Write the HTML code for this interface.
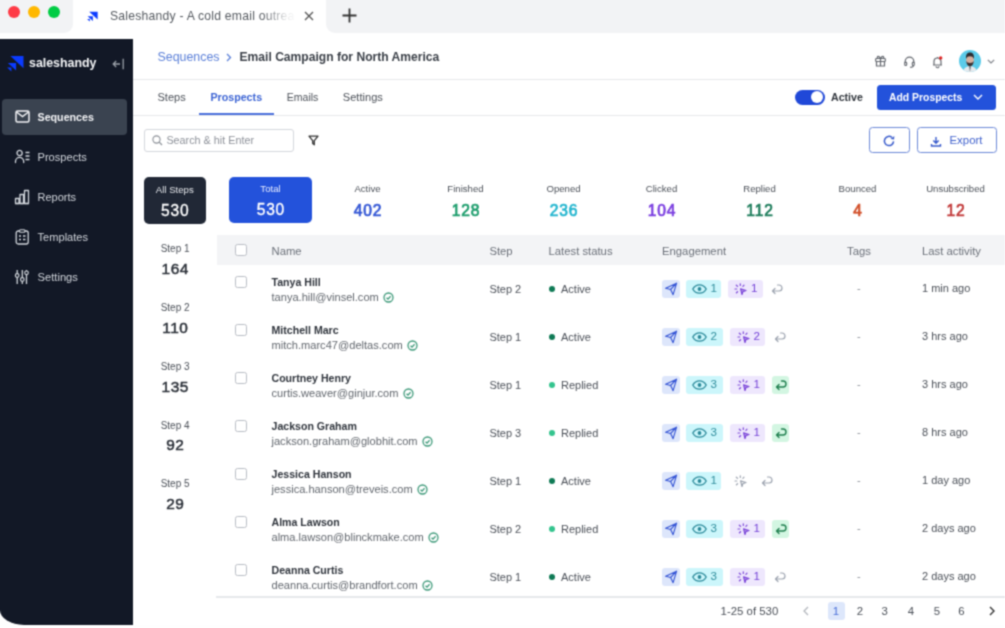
<!DOCTYPE html>
<html><head><meta charset="utf-8">
<style>
*{box-sizing:border-box;margin:0;padding:0}
html,body{width:1005px;height:628px;overflow:hidden;background:#fefefe}
body{position:relative;font-family:"Liberation Sans",sans-serif;color:#374151}
.a{position:absolute;white-space:nowrap;line-height:1}
.b{font-weight:bold}
svg{position:absolute;overflow:visible}
</style></head><body><svg width="0" height="0" style="position:absolute;left:0;top:0"><filter id="bl" x="0" y="0" width="100%" height="100%" color-interpolation-filters="sRGB"><feConvolveMatrix order="3" kernelMatrix="0.044 0.122 0.044 0.122 0.336 0.122 0.044 0.122 0.044" edgeMode="duplicate"/></filter></svg><div id="wrap" style="position:absolute;left:0;top:0;width:1005px;height:628px;background:#fefefe;filter:url(#bl)">
<!-- browser chrome -->
<div class="a" style="left:0;top:0;width:1005px;height:39px;background:#fff"></div>
<div class="a" style="left:0;top:0;width:73px;height:33px;background:#f2f3f5;border-bottom-right-radius:9px"></div>
<div class="a" style="left:326px;top:0;width:679px;height:33px;background:#f2f3f5;border-bottom-left-radius:9px"></div>
<div class="a" style="left:8.2px;top:6px;width:12px;height:12px;border-radius:50%;background:#fe3a46"></div>
<div class="a" style="left:28px;top:6px;width:12px;height:12px;border-radius:50%;background:#ffb800"></div>
<div class="a" style="left:48px;top:6px;width:12px;height:12px;border-radius:50%;background:#00cc44"></div>
<svg style="left:86.5px;top:10.8px" width="11" height="10.3" viewBox="0 0 17 16"><path fill="#0b3bff" d="M3.4 1H16.5V13.3Z M0.9 8H9.1V15.6Z M0.1 12.4H4.4V16.4Z"/></svg>
<div class="a" style="left:110px;top:9.5px;font-size:12.2px;letter-spacing:0.22px;color:#555a60">Saleshandy - A cold email outrea</div><div class="a" style="left:262px;top:5px;width:35px;height:20px;background:linear-gradient(90deg,rgba(255,255,255,0) 0%,rgba(255,255,255,0.85) 70%,#fff 100%)"></div>
<svg style="left:304px;top:10.5px" width="10" height="10" viewBox="0 0 10 10"><path d="M1 1L9 9M9 1L1 9" stroke="#555" stroke-width="1.3"/></svg>
<svg style="left:342px;top:8px" width="15" height="15" viewBox="0 0 15 15"><path d="M7.5 0.5V14.5M0.5 7.5H14.5" stroke="#333" stroke-width="1.8"/></svg>

<!-- sidebar -->
<div class="a" style="left:0;top:39px;width:133px;height:586px;background:#121826;border-bottom-left-radius:24px 15px"></div>
<svg style="left:7px;top:55px" width="17" height="17" viewBox="0 0 17 17"><path fill="#0b3bff" d="M3.4 1H16.5V13.3Z M0.9 8H9.1V15.6Z M0.1 12.4H4.4V16.4Z"/></svg>
<div class="a b" style="left:29px;top:57px;font-size:12.4px;color:#f3f4f6">saleshandy</div>
<svg style="left:112px;top:58px" width="13" height="12" viewBox="0 0 13 12"><path d="M1.2 6H8M4.2 3L1.2 6L4.2 9M11.2 0.8V11.2" stroke="#9aa0a8" stroke-width="1.3" fill="none"/></svg>

<div class="a" style="left:2px;top:99px;width:125px;height:36px;background:#3a4350;border-radius:4px"></div>
<svg style="left:15px;top:110px" width="15" height="13" viewBox="0 0 15 13"><rect x="1" y="1" width="13" height="11" rx="1.5" stroke="#f3f4f6" stroke-width="1.5" fill="none"/><path d="M1.5 2L7.5 6.5L13.5 2" stroke="#f3f4f6" stroke-width="1.5" fill="none"/></svg>
<div class="a b" style="left:37.5px;top:112px;font-size:10.7px;color:#f3f4f6">Sequences</div>

<div class="a" style="left:37.5px;top:152px;font-size:11.1px;color:#d1d5db">Prospects</div>
<div class="a" style="left:37.5px;top:192px;font-size:11px;color:#d1d5db">Reports</div>
<div class="a" style="left:37.5px;top:232px;font-size:11.1px;color:#d1d5db">Templates</div>
<div class="a" style="left:37.5px;top:272px;font-size:11.2px;color:#d1d5db">Settings</div>
<svg style="left:14px;top:149px" width="17" height="15" viewBox="0 0 17 15"><circle cx="5.6" cy="4" r="2.6" stroke="#d1d5db" stroke-width="1.3" fill="none"/><path d="M1.5 13.5V12.5A4 4 0 0 1 9.7 12.5V13.5" stroke="#d1d5db" stroke-width="1.3" fill="none" stroke-linecap="round"/><path d="M11.5 3.5H15.5M11.5 7H15.5M11.5 10.5H15.5" stroke="#d1d5db" stroke-width="1.3"/></svg>
<svg style="left:14px;top:189px" width="17" height="16" viewBox="0 0 17 16"><path d="M1.5 14.5V9.5H5V14.5ZM6 14.5V5.5H9.5V14.5ZM10.5 14.5V1.5H14.5A0 0 0 0 1 14.5 1.5V14.5Z" stroke="#d1d5db" stroke-width="1.3" fill="none" stroke-linejoin="round"/><path d="M1 14.5H15" stroke="#d1d5db" stroke-width="1.3"/></svg>
<svg style="left:15px;top:229px" width="15" height="16" viewBox="0 0 15 16"><rect x="1.2" y="2" width="12" height="13" rx="2" stroke="#d1d5db" stroke-width="1.3" fill="none"/><rect x="4.5" y="0.8" width="5.5" height="2.4" rx="1" stroke="#d1d5db" stroke-width="1.1" fill="#121826"/><path d="M4 7H6M8 7H10.5M4 10.5H6M8 10.5H10.5" stroke="#d1d5db" stroke-width="1.3"/></svg>
<svg style="left:15px;top:269px" width="15" height="16" viewBox="0 0 15 16"><path d="M2.2 1V15M7.3 1V15M11.5 1V15" stroke="#d1d5db" stroke-width="1.3"/><circle cx="2.2" cy="6.5" r="1.8" stroke="#d1d5db" stroke-width="1.2" fill="#121826"/><circle cx="7.3" cy="10.5" r="1.8" stroke="#d1d5db" stroke-width="1.2" fill="#121826"/><circle cx="11.5" cy="3.8" r="1.8" stroke="#d1d5db" stroke-width="1.2" fill="#121826"/></svg>


<!-- header -->
<div class="a" style="left:133px;top:39px;width:872px;height:586px;background:#fff"></div>
<div class="a" style="left:157.5px;top:51px;font-size:12.4px;color:#5a7fd8">Sequences</div>
<svg style="left:226px;top:53px" width="6" height="9" viewBox="0 0 6 9"><path d="M1 1L4.5 4.5L1 8" stroke="#5a7fd8" stroke-width="1.3" fill="none"/></svg>
<div class="a b" style="left:239.5px;top:51px;font-size:12.1px;color:#3a3f47">Email Campaign for North America</div>
<div class="a" style="left:133px;top:78.5px;width:872px;height:1.5px;background:#e6e8eb"></div>
<svg style="left:875px;top:55px" width="11" height="12" viewBox="0 0 11 12"><rect x="0.7" y="3.5" width="9.6" height="3" rx="0.8" stroke="#64686f" stroke-width="1.2" fill="none"/><path d="M1.5 6.5V11H9.5V6.5M5.5 3.5V11" stroke="#64686f" stroke-width="1.2" fill="none"/><path d="M5.5 3.5C4 0.5 1.5 1 2.5 3.2M5.5 3.5C7 0.5 9.5 1 8.5 3.2" stroke="#64686f" stroke-width="1.1" fill="none"/></svg>
<svg style="left:903.5px;top:56px" width="11" height="12" viewBox="0 0 11 12"><path d="M1.2 7V5.5A4.3 4.3 0 0 1 9.8 5.5V7" stroke="#64686f" stroke-width="1.2" fill="none"/><rect x="0.7" y="6" width="2" height="3.5" rx="1" stroke="#64686f" stroke-width="1.1" fill="none"/><rect x="8.3" y="6" width="2" height="3.5" rx="1" stroke="#64686f" stroke-width="1.1" fill="none"/><path d="M9.5 9.5C9.5 10.8 8 11.3 6 11.3" stroke="#64686f" stroke-width="1.1" fill="none"/></svg>
<svg style="left:932px;top:55.5px" width="11" height="12" viewBox="0 0 11 12"><path d="M1 9H10M2 9V5.5A3.5 3.5 0 0 1 9 5.5V9" stroke="#64686f" stroke-width="1.2" fill="none" stroke-linejoin="round"/><path d="M4 10.3A1.5 1.5 0 0 0 7 10.3" stroke="#64686f" stroke-width="1.1" fill="none"/><path d="M5.5 1V2" stroke="#64686f" stroke-width="1.1"/><circle cx="8.7" cy="1.9" r="1.7" fill="#e02424"/></svg>
<svg style="left:959px;top:50px" width="22" height="22" viewBox="0 0 22 22"><defs><clipPath id="av"><circle cx="11" cy="11" r="11"/></clipPath></defs><g clip-path="url(#av)"><rect width="22" height="22" fill="#5ccbe9"/><path d="M3.5 23C4.5 18 7.5 16.3 11 16.3S17.5 18 18.5 23Z" fill="#e6eaee"/><path d="M10.4 16.5L11 22L11.6 16.5Z" fill="#2a3038"/><ellipse cx="11" cy="10" rx="3.9" ry="5.4" fill="#d4b0a0"/><path d="M7 9C6.6 4 8.6 2.6 11 2.6S15.4 4 15 9C14.3 6.8 13 6.2 11 6.2S7.7 6.8 7 9Z" fill="#2a2c30"/><path d="M7.2 10.8C7.5 14.8 9 16.5 11 16.5S14.5 14.8 14.8 10.8C14 12.5 13.2 13 11 13S8 12.5 7.2 10.8Z" fill="#3a3234"/></g></svg>
<svg style="left:986.8px;top:58.8px" width="8" height="5" viewBox="0 0 8 5"><path d="M0.8 0.8L4 4L7.2 0.8" stroke="#7a7e85" stroke-width="1.1" fill="none"/></svg>


<div class="a" style="left:157.5px;top:91.5px;font-size:11px;color:#4b5058">Steps</div>
<div class="a b" style="left:210.4px;top:91.5px;font-size:10.7px;color:#3c64d4">Prospects</div>
<div class="a" style="left:286.8px;top:91.5px;font-size:10.5px;color:#4b5058">Emails</div>
<div class="a" style="left:342.8px;top:91.5px;font-size:11.1px;color:#4b5058">Settings</div>
<div class="a" style="left:199px;top:113px;width:75px;height:2px;background:#4a6fdc"></div>
<div class="a" style="left:133px;top:114.5px;width:872px;height:1.5px;background:#e6e8eb"></div>

<!-- toggle / add prospects -->
<div class="a" style="left:794.6px;top:89.6px;width:30px;height:15px;border-radius:8px;background:#2048d8"></div>
<div class="a" style="left:811px;top:91px;width:12px;height:12px;border-radius:50%;background:#fff"></div>
<div class="a b" style="left:831px;top:92px;font-size:10.6px;color:#2f343b">Active</div>
<div class="a" style="left:876.7px;top:85px;width:119.3px;height:24.5px;border-radius:3.5px;background:#2352db"></div>
<div class="a b" style="left:889px;top:93px;font-size:10.4px;color:#fff">Add Prospects</div>
<svg style="left:973px;top:93.8px" width="10" height="6" viewBox="0 0 10 6"><path d="M1 1L5 5L9 1" stroke="#fff" stroke-width="1.4" fill="none"/></svg>

<!-- search row -->
<div class="a" style="left:144px;top:128.5px;width:150px;height:23.5px;border:1px solid #d4d7dc;border-radius:3px"></div>
<svg style="left:152px;top:134.5px" width="11" height="11" viewBox="0 0 11 11"><circle cx="4.5" cy="4.5" r="3.6" stroke="#8a8f96" stroke-width="1.1" fill="none"/><path d="M7.2 7.2L10 10" stroke="#8a8f96" stroke-width="1.2"/></svg>
<div class="a" style="left:166.4px;top:134.8px;font-size:10.8px;color:#8d9199">Search &amp; hit Enter</div>
<svg style="left:308px;top:134.5px" width="11" height="11" viewBox="0 0 11 11"><path d="M1 1.2H10L6.3 5.6V9.8L4.7 8.6V5.6Z" stroke="#333" stroke-width="1.3" fill="none" stroke-linejoin="round"/></svg>
<div class="a" style="left:868.6px;top:127.2px;width:41px;height:26.3px;border:1px solid #6c89d8;border-radius:3.5px"></div>
<svg style="left:883px;top:134.6px" width="12" height="12" viewBox="0 0 12 12"><path d="M10.58 6.4A4.6 4.6 0 1 1 8.9 2.4" stroke="#3a5ccc" stroke-width="1.5" fill="none"/><path d="M11.3 0.9L11.1 4.6L7.5 3.9Z" fill="#3a5ccc"/></svg>
<div class="a" style="left:916.6px;top:127.2px;width:80.2px;height:26.3px;border:1px solid #6c89d8;border-radius:3.5px"></div>
<svg style="left:929.5px;top:134.5px" width="12" height="12" viewBox="0 0 12 12"><path d="M6 2V8M3.3 5.5L6 8.2L8.7 5.5M1.5 9V11H10.5V9" stroke="#3a5ccc" stroke-width="1.4" fill="none"/></svg>
<div class="a" style="left:949.5px;top:134.5px;font-size:11.4px;color:#3d5fcc">Export</div>

<!-- stats -->
<div class="a" style="left:144px;top:177.3px;width:61.6px;height:46.7px;border-radius:5px;background:#212836"></div>
<div class="a" style="left:144px;top:184.5px;width:61.6px;text-align:center;font-size:9.6px;color:#e5e7eb">All Steps</div>
<div class="a" style="left:144.4px;top:202.5px;width:61.6px;text-align:center;font-size:15.6px;letter-spacing:0.8px;-webkit-text-stroke:0.35px #fff;color:#fff">530</div>
<div class="a" style="left:229px;top:176.7px;width:83px;height:46.8px;border-radius:5px;background:#2352db"></div>
<div class="a" style="left:229px;top:183.5px;width:83px;text-align:center;font-size:9.6px;color:#e8edff">Total</div>
<div class="a" style="left:229.4px;top:202px;width:83px;text-align:center;font-size:15.6px;letter-spacing:0.8px;-webkit-text-stroke:0.35px #fff;color:#fff">530</div>

<div class="a" style="left:317.5px;top:184px;width:100px;text-align:center;font-size:9.6px;color:#4b5058">Active</div>
<div class="a" style="left:318.0px;top:202.6px;width:100px;text-align:center;font-size:15.6px;letter-spacing:0.8px;-webkit-text-stroke:0.7px #3457d5;color:#3457d5">402</div>
<div class="a" style="left:415.5px;top:184px;width:100px;text-align:center;font-size:9.6px;color:#4b5058">Finished</div>
<div class="a" style="left:416.0px;top:202.6px;width:100px;text-align:center;font-size:15.6px;letter-spacing:0.8px;-webkit-text-stroke:0.7px #1f9e6e;color:#1f9e6e">128</div>
<div class="a" style="left:513.5px;top:184px;width:100px;text-align:center;font-size:9.6px;color:#4b5058">Opened</div>
<div class="a" style="left:514.0px;top:202.6px;width:100px;text-align:center;font-size:15.6px;letter-spacing:0.8px;-webkit-text-stroke:0.7px #25b6cf;color:#25b6cf">236</div>
<div class="a" style="left:611.5px;top:184px;width:100px;text-align:center;font-size:9.6px;color:#4b5058">Clicked</div>
<div class="a" style="left:612.0px;top:202.6px;width:100px;text-align:center;font-size:15.6px;letter-spacing:0.8px;-webkit-text-stroke:0.7px #7b3fe0;color:#7b3fe0">104</div>
<div class="a" style="left:709.5px;top:184px;width:100px;text-align:center;font-size:9.6px;color:#4b5058">Replied</div>
<div class="a" style="left:710.0px;top:202.6px;width:100px;text-align:center;font-size:15.6px;letter-spacing:0.8px;-webkit-text-stroke:0.7px #1e7d5c;color:#1e7d5c">112</div>
<div class="a" style="left:807.5px;top:184px;width:100px;text-align:center;font-size:9.6px;color:#4b5058">Bounced</div>
<div class="a" style="left:808.0px;top:202.6px;width:100px;text-align:center;font-size:15.6px;letter-spacing:0.8px;-webkit-text-stroke:0.7px #d2502a;color:#d2502a">4</div>
<div class="a" style="left:905.5px;top:184px;width:100px;text-align:center;font-size:9.6px;color:#4b5058">Unsubscribed</div>
<div class="a" style="left:906.0px;top:202.6px;width:100px;text-align:center;font-size:15.6px;letter-spacing:0.8px;-webkit-text-stroke:0.7px #c23a3a;color:#c23a3a">12</div>
<div class="a" style="left:144.3px;top:244.3px;width:61.6px;text-align:center;font-size:10px;color:#4b5058">Step 1</div>
<div class="a" style="left:144.5px;top:261.0px;width:61.6px;text-align:center;font-size:15.4px;letter-spacing:0.6px;-webkit-text-stroke:0.5px #2b3038;color:#2b3038">164</div>
<div class="a" style="left:144.3px;top:303.05px;width:61.6px;text-align:center;font-size:10px;color:#4b5058">Step 2</div>
<div class="a" style="left:144.5px;top:319.75px;width:61.6px;text-align:center;font-size:15.4px;letter-spacing:0.6px;-webkit-text-stroke:0.5px #2b3038;color:#2b3038">110</div>
<div class="a" style="left:144.3px;top:361.8px;width:61.6px;text-align:center;font-size:10px;color:#4b5058">Step 3</div>
<div class="a" style="left:144.5px;top:378.5px;width:61.6px;text-align:center;font-size:15.4px;letter-spacing:0.6px;-webkit-text-stroke:0.5px #2b3038;color:#2b3038">135</div>
<div class="a" style="left:144.3px;top:420.55px;width:61.6px;text-align:center;font-size:10px;color:#4b5058">Step 4</div>
<div class="a" style="left:144.5px;top:437.25px;width:61.6px;text-align:center;font-size:15.4px;letter-spacing:0.6px;-webkit-text-stroke:0.5px #2b3038;color:#2b3038">92</div>
<div class="a" style="left:144.3px;top:479.3px;width:61.6px;text-align:center;font-size:10px;color:#4b5058">Step 5</div>
<div class="a" style="left:144.5px;top:496.0px;width:61.6px;text-align:center;font-size:15.4px;letter-spacing:0.6px;-webkit-text-stroke:0.5px #2b3038;color:#2b3038">29</div>


<!-- table header -->
<div class="a" style="left:217px;top:235px;width:788px;height:30px;background:#f3f4f6"></div>
<div class="a" style="left:235px;top:244.3px;width:12px;height:12px;border:1px solid #b9bdc4;border-radius:2.5px;background:#fff"></div>
<div class="a" style="left:271.5px;top:245.5px;font-size:11.3px;color:#6b7079">Name</div>
<div class="a" style="left:489.4px;top:245.5px;font-size:11.3px;color:#6b7079">Step</div>
<div class="a" style="left:548.5px;top:245.5px;font-size:11.3px;color:#6b7079">Latest status</div>
<div class="a" style="left:662px;top:245.5px;font-size:11.3px;color:#6b7079">Engagement</div>
<div class="a" style="left:847px;top:245.5px;font-size:11.3px;color:#6b7079">Tags</div>
<div class="a" style="left:922px;top:245.5px;font-size:11.3px;color:#6b7079">Last activity</div>

<div class="a" style="left:235px;top:275.7px;width:12px;height:12px;border:1px solid #b9bdc4;border-radius:2.5px;background:#fff"></div>
<div class="a b" style="left:271.5px;top:277px;font-size:10.6px;color:#2f343c;">Tanya Hill</div>
<div class="a" style="left:271.5px;top:292px;font-size:11.08px;color:#62676e">tanya.hill@vinsel.com<svg style="position:relative;left:0;top:0;margin-left:4px;vertical-align:-2px" width="11" height="11" viewBox="0 0 11 11"><circle cx="5.5" cy="5.5" r="4.5" stroke="#3f9a7a" stroke-width="1.3" fill="none"/><path d="M3.5 5.8L5 7.1L7.6 4.2" stroke="#3f9a7a" stroke-width="1.3" fill="none"/></svg></div>
<div class="a" style="left:489.4px;top:283.5px;font-size:11px;color:#4b5058;">Step 2</div>
<div class="a" style="left:548.9px;top:285.5px;width:6.5px;height:6.5px;border-radius:50%;background:#0f7a55"></div>
<div class="a" style="left:561px;top:283.5px;font-size:11px;color:#4b5058;">Active</div>
<div class="a" style="left:662.2px;top:280px;width:17.6px;height:17.7px;border-radius:3px;background:#dde6fb"></div>
<svg style="left:664px;top:282px" width="14" height="14" viewBox="0 0 14 14"><path d="M1.6 6.3L12.6 1.2L9.1 12.7L6.6 7.5Z M6.6 7.5L12.6 1.2" stroke="#3555d5" stroke-width="1.15" fill="none" stroke-linejoin="round"/></svg>
<div class="a" style="left:685.9px;top:280px;width:35px;height:17.7px;border-radius:3px;background:#ccf6fb"></div>
<svg style="left:692px;top:284px" width="15" height="10" viewBox="0 0 15 10"><path d="M0.8 5C2.5 1.8 5 0.8 7.5 0.8S12.5 1.8 14.2 5C12.5 8.2 10 9.2 7.5 9.2S2.5 8.2 0.8 5Z" stroke="#2b8a9a" stroke-width="1.3" fill="none"/><circle cx="7.5" cy="5" r="1.9" fill="#2b8a9a"/></svg>
<div class="a" style="left:710.5px;top:281.8px;font-size:11.6px;color:#2f8d9c;">1</div>
<div class="a" style="left:727.5px;top:280px;width:35px;height:17.7px;border-radius:3px;background:#eee7fd"></div>
<svg style="left:734.0px;top:283px" width="13" height="13" viewBox="0 0 13 13"><path d="M1 6H2.8M2.3 2.2L3.6 3.4M6.3 0.8V2.4M10 2.2L8.9 3.4M2.4 9.8L3.6 8.7" stroke="#7b46d8" stroke-width="1.2" stroke-linecap="round"/><path d="M6.6 5.9L12 7.5L8.9 8.6L8 11.5Z" stroke="#7b46d8" stroke-width="1.2" fill="#7b46d8" fill-opacity="0.45" stroke-linejoin="round"/></svg>
<div class="a" style="left:751.0px;top:281.8px;font-size:11.6px;color:#7442d6;">1</div>
<svg style="left:771.1px;top:284px" width="12" height="10" viewBox="0 0 12 10"><path d="M1.5 7H8A3 3 0 0 0 8 1H6.5M4 4.5L1.5 7L4 9.5" stroke="#9ca3af" stroke-width="1.2" fill="none" stroke-linecap="round" stroke-linejoin="round"/></svg>
<div class="a" style="left:857px;top:283px;font-size:11px;color:#8d9199;">-</div>
<div class="a" style="left:922px;top:283px;font-size:11px;color:#4b5058;">1 min ago</div>
<div class="a" style="left:235px;top:323.7px;width:12px;height:12px;border:1px solid #b9bdc4;border-radius:2.5px;background:#fff"></div>
<div class="a b" style="left:271.5px;top:325px;font-size:10.6px;color:#2f343c;">Mitchell Marc</div>
<div class="a" style="left:271.5px;top:340px;font-size:11.08px;color:#62676e">mitch.marc47@deltas.com<svg style="position:relative;left:0;top:0;margin-left:4px;vertical-align:-2px" width="11" height="11" viewBox="0 0 11 11"><circle cx="5.5" cy="5.5" r="4.5" stroke="#3f9a7a" stroke-width="1.3" fill="none"/><path d="M3.5 5.8L5 7.1L7.6 4.2" stroke="#3f9a7a" stroke-width="1.3" fill="none"/></svg></div>
<div class="a" style="left:489.4px;top:331.5px;font-size:11px;color:#4b5058;">Step 1</div>
<div class="a" style="left:548.9px;top:333.5px;width:6.5px;height:6.5px;border-radius:50%;background:#0f7a55"></div>
<div class="a" style="left:561px;top:331.5px;font-size:11px;color:#4b5058;">Active</div>
<div class="a" style="left:662.2px;top:328px;width:17.6px;height:17.7px;border-radius:3px;background:#dde6fb"></div>
<svg style="left:664px;top:330px" width="14" height="14" viewBox="0 0 14 14"><path d="M1.6 6.3L12.6 1.2L9.1 12.7L6.6 7.5Z M6.6 7.5L12.6 1.2" stroke="#3555d5" stroke-width="1.15" fill="none" stroke-linejoin="round"/></svg>
<div class="a" style="left:685.9px;top:328px;width:37.6px;height:17.7px;border-radius:3px;background:#ccf6fb"></div>
<svg style="left:692px;top:332px" width="15" height="10" viewBox="0 0 15 10"><path d="M0.8 5C2.5 1.8 5 0.8 7.5 0.8S12.5 1.8 14.2 5C12.5 8.2 10 9.2 7.5 9.2S2.5 8.2 0.8 5Z" stroke="#2b8a9a" stroke-width="1.3" fill="none"/><circle cx="7.5" cy="5" r="1.9" fill="#2b8a9a"/></svg>
<div class="a" style="left:710.5px;top:329.8px;font-size:11.6px;color:#2f8d9c;">2</div>
<div class="a" style="left:730.1px;top:328px;width:35px;height:17.7px;border-radius:3px;background:#eee7fd"></div>
<svg style="left:736.6px;top:331px" width="13" height="13" viewBox="0 0 13 13"><path d="M1 6H2.8M2.3 2.2L3.6 3.4M6.3 0.8V2.4M10 2.2L8.9 3.4M2.4 9.8L3.6 8.7" stroke="#7b46d8" stroke-width="1.2" stroke-linecap="round"/><path d="M6.6 5.9L12 7.5L8.9 8.6L8 11.5Z" stroke="#7b46d8" stroke-width="1.2" fill="#7b46d8" fill-opacity="0.45" stroke-linejoin="round"/></svg>
<div class="a" style="left:753.6px;top:329.8px;font-size:11.6px;color:#7442d6;">2</div>
<svg style="left:773.7px;top:332px" width="12" height="10" viewBox="0 0 12 10"><path d="M1.5 7H8A3 3 0 0 0 8 1H6.5M4 4.5L1.5 7L4 9.5" stroke="#9ca3af" stroke-width="1.2" fill="none" stroke-linecap="round" stroke-linejoin="round"/></svg>
<div class="a" style="left:857px;top:331px;font-size:11px;color:#8d9199;">-</div>
<div class="a" style="left:922px;top:331px;font-size:11px;color:#4b5058;">3 hrs ago</div>
<div class="a" style="left:235px;top:371.7px;width:12px;height:12px;border:1px solid #b9bdc4;border-radius:2.5px;background:#fff"></div>
<div class="a b" style="left:271.5px;top:373px;font-size:10.6px;color:#2f343c;">Courtney Henry</div>
<div class="a" style="left:271.5px;top:388px;font-size:11.08px;color:#62676e">curtis.weaver@ginjur.com<svg style="position:relative;left:0;top:0;margin-left:4px;vertical-align:-2px" width="11" height="11" viewBox="0 0 11 11"><circle cx="5.5" cy="5.5" r="4.5" stroke="#3f9a7a" stroke-width="1.3" fill="none"/><path d="M3.5 5.8L5 7.1L7.6 4.2" stroke="#3f9a7a" stroke-width="1.3" fill="none"/></svg></div>
<div class="a" style="left:489.4px;top:379.5px;font-size:11px;color:#4b5058;">Step 1</div>
<div class="a" style="left:548.9px;top:381.5px;width:6.5px;height:6.5px;border-radius:50%;background:#34c48e"></div>
<div class="a" style="left:561px;top:379.5px;font-size:11px;color:#4b5058;">Replied</div>
<div class="a" style="left:662.2px;top:376px;width:17.6px;height:17.7px;border-radius:3px;background:#dde6fb"></div>
<svg style="left:664px;top:378px" width="14" height="14" viewBox="0 0 14 14"><path d="M1.6 6.3L12.6 1.2L9.1 12.7L6.6 7.5Z M6.6 7.5L12.6 1.2" stroke="#3555d5" stroke-width="1.15" fill="none" stroke-linejoin="round"/></svg>
<div class="a" style="left:685.9px;top:376px;width:37.6px;height:17.7px;border-radius:3px;background:#ccf6fb"></div>
<svg style="left:692px;top:380px" width="15" height="10" viewBox="0 0 15 10"><path d="M0.8 5C2.5 1.8 5 0.8 7.5 0.8S12.5 1.8 14.2 5C12.5 8.2 10 9.2 7.5 9.2S2.5 8.2 0.8 5Z" stroke="#2b8a9a" stroke-width="1.3" fill="none"/><circle cx="7.5" cy="5" r="1.9" fill="#2b8a9a"/></svg>
<div class="a" style="left:710.5px;top:377.8px;font-size:11.6px;color:#2f8d9c;">3</div>
<div class="a" style="left:730.1px;top:376px;width:35px;height:17.7px;border-radius:3px;background:#eee7fd"></div>
<svg style="left:736.6px;top:379px" width="13" height="13" viewBox="0 0 13 13"><path d="M1 6H2.8M2.3 2.2L3.6 3.4M6.3 0.8V2.4M10 2.2L8.9 3.4M2.4 9.8L3.6 8.7" stroke="#7b46d8" stroke-width="1.2" stroke-linecap="round"/><path d="M6.6 5.9L12 7.5L8.9 8.6L8 11.5Z" stroke="#7b46d8" stroke-width="1.2" fill="#7b46d8" fill-opacity="0.45" stroke-linejoin="round"/></svg>
<div class="a" style="left:753.6px;top:377.8px;font-size:11.6px;color:#7442d6;">1</div>
<div class="a" style="left:771.7px;top:376px;width:17.6px;height:17.7px;border-radius:3px;background:#d3f6e2"></div>
<svg style="left:774.7px;top:380px" width="12" height="10" viewBox="0 0 12 10"><path d="M1.5 7H8A3 3 0 0 0 8 1H6.5M4 4.5L1.5 7L4 9.5" stroke="#1f7f4f" stroke-width="1.4" fill="none" stroke-linecap="round" stroke-linejoin="round"/></svg>
<div class="a" style="left:857px;top:379px;font-size:11px;color:#8d9199;">-</div>
<div class="a" style="left:922px;top:379px;font-size:11px;color:#4b5058;">3 hrs ago</div>
<div class="a" style="left:235px;top:419.7px;width:12px;height:12px;border:1px solid #b9bdc4;border-radius:2.5px;background:#fff"></div>
<div class="a b" style="left:271.5px;top:421px;font-size:10.6px;color:#2f343c;">Jackson Graham</div>
<div class="a" style="left:271.5px;top:436px;font-size:11.08px;color:#62676e">jackson.graham@globhit.com<svg style="position:relative;left:0;top:0;margin-left:4px;vertical-align:-2px" width="11" height="11" viewBox="0 0 11 11"><circle cx="5.5" cy="5.5" r="4.5" stroke="#3f9a7a" stroke-width="1.3" fill="none"/><path d="M3.5 5.8L5 7.1L7.6 4.2" stroke="#3f9a7a" stroke-width="1.3" fill="none"/></svg></div>
<div class="a" style="left:489.4px;top:427.5px;font-size:11px;color:#4b5058;">Step 3</div>
<div class="a" style="left:548.9px;top:429.5px;width:6.5px;height:6.5px;border-radius:50%;background:#34c48e"></div>
<div class="a" style="left:561px;top:427.5px;font-size:11px;color:#4b5058;">Replied</div>
<div class="a" style="left:662.2px;top:424px;width:17.6px;height:17.7px;border-radius:3px;background:#dde6fb"></div>
<svg style="left:664px;top:426px" width="14" height="14" viewBox="0 0 14 14"><path d="M1.6 6.3L12.6 1.2L9.1 12.7L6.6 7.5Z M6.6 7.5L12.6 1.2" stroke="#3555d5" stroke-width="1.15" fill="none" stroke-linejoin="round"/></svg>
<div class="a" style="left:685.9px;top:424px;width:37.6px;height:17.7px;border-radius:3px;background:#ccf6fb"></div>
<svg style="left:692px;top:428px" width="15" height="10" viewBox="0 0 15 10"><path d="M0.8 5C2.5 1.8 5 0.8 7.5 0.8S12.5 1.8 14.2 5C12.5 8.2 10 9.2 7.5 9.2S2.5 8.2 0.8 5Z" stroke="#2b8a9a" stroke-width="1.3" fill="none"/><circle cx="7.5" cy="5" r="1.9" fill="#2b8a9a"/></svg>
<div class="a" style="left:710.5px;top:425.8px;font-size:11.6px;color:#2f8d9c;">3</div>
<div class="a" style="left:730.1px;top:424px;width:35px;height:17.7px;border-radius:3px;background:#eee7fd"></div>
<svg style="left:736.6px;top:427px" width="13" height="13" viewBox="0 0 13 13"><path d="M1 6H2.8M2.3 2.2L3.6 3.4M6.3 0.8V2.4M10 2.2L8.9 3.4M2.4 9.8L3.6 8.7" stroke="#7b46d8" stroke-width="1.2" stroke-linecap="round"/><path d="M6.6 5.9L12 7.5L8.9 8.6L8 11.5Z" stroke="#7b46d8" stroke-width="1.2" fill="#7b46d8" fill-opacity="0.45" stroke-linejoin="round"/></svg>
<div class="a" style="left:753.6px;top:425.8px;font-size:11.6px;color:#7442d6;">1</div>
<div class="a" style="left:771.7px;top:424px;width:17.6px;height:17.7px;border-radius:3px;background:#d3f6e2"></div>
<svg style="left:774.7px;top:428px" width="12" height="10" viewBox="0 0 12 10"><path d="M1.5 7H8A3 3 0 0 0 8 1H6.5M4 4.5L1.5 7L4 9.5" stroke="#1f7f4f" stroke-width="1.4" fill="none" stroke-linecap="round" stroke-linejoin="round"/></svg>
<div class="a" style="left:857px;top:427px;font-size:11px;color:#8d9199;">-</div>
<div class="a" style="left:922px;top:427px;font-size:11px;color:#4b5058;">8 hrs ago</div>
<div class="a" style="left:235px;top:467.7px;width:12px;height:12px;border:1px solid #b9bdc4;border-radius:2.5px;background:#fff"></div>
<div class="a b" style="left:271.5px;top:469px;font-size:10.6px;color:#2f343c;">Jessica Hanson</div>
<div class="a" style="left:271.5px;top:484px;font-size:11.08px;color:#62676e">jessica.hanson@treveis.com<svg style="position:relative;left:0;top:0;margin-left:4px;vertical-align:-2px" width="11" height="11" viewBox="0 0 11 11"><circle cx="5.5" cy="5.5" r="4.5" stroke="#3f9a7a" stroke-width="1.3" fill="none"/><path d="M3.5 5.8L5 7.1L7.6 4.2" stroke="#3f9a7a" stroke-width="1.3" fill="none"/></svg></div>
<div class="a" style="left:489.4px;top:475.5px;font-size:11px;color:#4b5058;">Step 1</div>
<div class="a" style="left:548.9px;top:477.5px;width:6.5px;height:6.5px;border-radius:50%;background:#0f7a55"></div>
<div class="a" style="left:561px;top:475.5px;font-size:11px;color:#4b5058;">Active</div>
<div class="a" style="left:662.2px;top:472px;width:17.6px;height:17.7px;border-radius:3px;background:#dde6fb"></div>
<svg style="left:664px;top:474px" width="14" height="14" viewBox="0 0 14 14"><path d="M1.6 6.3L12.6 1.2L9.1 12.7L6.6 7.5Z M6.6 7.5L12.6 1.2" stroke="#3555d5" stroke-width="1.15" fill="none" stroke-linejoin="round"/></svg>
<div class="a" style="left:685.9px;top:472px;width:35px;height:17.7px;border-radius:3px;background:#ccf6fb"></div>
<svg style="left:692px;top:476px" width="15" height="10" viewBox="0 0 15 10"><path d="M0.8 5C2.5 1.8 5 0.8 7.5 0.8S12.5 1.8 14.2 5C12.5 8.2 10 9.2 7.5 9.2S2.5 8.2 0.8 5Z" stroke="#2b8a9a" stroke-width="1.3" fill="none"/><circle cx="7.5" cy="5" r="1.9" fill="#2b8a9a"/></svg>
<div class="a" style="left:710.5px;top:473.8px;font-size:11.6px;color:#2f8d9c;">1</div>
<svg style="left:734.0px;top:475px" width="13" height="13" viewBox="0 0 13 13"><path d="M1 6H2.8M2.3 2.2L3.6 3.4M6.3 0.8V2.4M10 2.2L8.9 3.4M2.4 9.8L3.6 8.7" stroke="#9ca3af" stroke-width="1.2" stroke-linecap="round"/><path d="M6.6 5.9L12 7.5L8.9 8.6L8 11.5Z" stroke="#9ca3af" stroke-width="1.2" fill="#9ca3af" fill-opacity="0" stroke-linejoin="round"/></svg>
<svg style="left:760.5px;top:476px" width="12" height="10" viewBox="0 0 12 10"><path d="M1.5 7H8A3 3 0 0 0 8 1H6.5M4 4.5L1.5 7L4 9.5" stroke="#9ca3af" stroke-width="1.2" fill="none" stroke-linecap="round" stroke-linejoin="round"/></svg>
<div class="a" style="left:857px;top:475px;font-size:11px;color:#8d9199;">-</div>
<div class="a" style="left:922px;top:475px;font-size:11px;color:#4b5058;">1 day ago</div>
<div class="a" style="left:235px;top:515.7px;width:12px;height:12px;border:1px solid #b9bdc4;border-radius:2.5px;background:#fff"></div>
<div class="a b" style="left:271.5px;top:517px;font-size:10.6px;color:#2f343c;">Alma Lawson</div>
<div class="a" style="left:271.5px;top:532px;font-size:11.08px;color:#62676e">alma.lawson@blinckmake.com<svg style="position:relative;left:0;top:0;margin-left:4px;vertical-align:-2px" width="11" height="11" viewBox="0 0 11 11"><circle cx="5.5" cy="5.5" r="4.5" stroke="#3f9a7a" stroke-width="1.3" fill="none"/><path d="M3.5 5.8L5 7.1L7.6 4.2" stroke="#3f9a7a" stroke-width="1.3" fill="none"/></svg></div>
<div class="a" style="left:489.4px;top:523.5px;font-size:11px;color:#4b5058;">Step 2</div>
<div class="a" style="left:548.9px;top:525.5px;width:6.5px;height:6.5px;border-radius:50%;background:#34c48e"></div>
<div class="a" style="left:561px;top:523.5px;font-size:11px;color:#4b5058;">Replied</div>
<div class="a" style="left:662.2px;top:520px;width:17.6px;height:17.7px;border-radius:3px;background:#dde6fb"></div>
<svg style="left:664px;top:522px" width="14" height="14" viewBox="0 0 14 14"><path d="M1.6 6.3L12.6 1.2L9.1 12.7L6.6 7.5Z M6.6 7.5L12.6 1.2" stroke="#3555d5" stroke-width="1.15" fill="none" stroke-linejoin="round"/></svg>
<div class="a" style="left:685.9px;top:520px;width:37.6px;height:17.7px;border-radius:3px;background:#ccf6fb"></div>
<svg style="left:692px;top:524px" width="15" height="10" viewBox="0 0 15 10"><path d="M0.8 5C2.5 1.8 5 0.8 7.5 0.8S12.5 1.8 14.2 5C12.5 8.2 10 9.2 7.5 9.2S2.5 8.2 0.8 5Z" stroke="#2b8a9a" stroke-width="1.3" fill="none"/><circle cx="7.5" cy="5" r="1.9" fill="#2b8a9a"/></svg>
<div class="a" style="left:710.5px;top:521.8px;font-size:11.6px;color:#2f8d9c;">3</div>
<div class="a" style="left:730.1px;top:520px;width:35px;height:17.7px;border-radius:3px;background:#eee7fd"></div>
<svg style="left:736.6px;top:523px" width="13" height="13" viewBox="0 0 13 13"><path d="M1 6H2.8M2.3 2.2L3.6 3.4M6.3 0.8V2.4M10 2.2L8.9 3.4M2.4 9.8L3.6 8.7" stroke="#7b46d8" stroke-width="1.2" stroke-linecap="round"/><path d="M6.6 5.9L12 7.5L8.9 8.6L8 11.5Z" stroke="#7b46d8" stroke-width="1.2" fill="#7b46d8" fill-opacity="0.45" stroke-linejoin="round"/></svg>
<div class="a" style="left:753.6px;top:521.8px;font-size:11.6px;color:#7442d6;">1</div>
<div class="a" style="left:771.7px;top:520px;width:17.6px;height:17.7px;border-radius:3px;background:#d3f6e2"></div>
<svg style="left:774.7px;top:524px" width="12" height="10" viewBox="0 0 12 10"><path d="M1.5 7H8A3 3 0 0 0 8 1H6.5M4 4.5L1.5 7L4 9.5" stroke="#1f7f4f" stroke-width="1.4" fill="none" stroke-linecap="round" stroke-linejoin="round"/></svg>
<div class="a" style="left:857px;top:523px;font-size:11px;color:#8d9199;">-</div>
<div class="a" style="left:922px;top:523px;font-size:11px;color:#4b5058;">2 days ago</div>
<div class="a" style="left:235px;top:563.7px;width:12px;height:12px;border:1px solid #b9bdc4;border-radius:2.5px;background:#fff"></div>
<div class="a b" style="left:271.5px;top:565px;font-size:10.6px;color:#2f343c;">Deanna Curtis</div>
<div class="a" style="left:271.5px;top:580px;font-size:11.08px;color:#62676e">deanna.curtis@brandfort.com<svg style="position:relative;left:0;top:0;margin-left:4px;vertical-align:-2px" width="11" height="11" viewBox="0 0 11 11"><circle cx="5.5" cy="5.5" r="4.5" stroke="#3f9a7a" stroke-width="1.3" fill="none"/><path d="M3.5 5.8L5 7.1L7.6 4.2" stroke="#3f9a7a" stroke-width="1.3" fill="none"/></svg></div>
<div class="a" style="left:489.4px;top:571.5px;font-size:11px;color:#4b5058;">Step 1</div>
<div class="a" style="left:548.9px;top:573.5px;width:6.5px;height:6.5px;border-radius:50%;background:#0f7a55"></div>
<div class="a" style="left:561px;top:571.5px;font-size:11px;color:#4b5058;">Active</div>
<div class="a" style="left:662.2px;top:568px;width:17.6px;height:17.7px;border-radius:3px;background:#dde6fb"></div>
<svg style="left:664px;top:570px" width="14" height="14" viewBox="0 0 14 14"><path d="M1.6 6.3L12.6 1.2L9.1 12.7L6.6 7.5Z M6.6 7.5L12.6 1.2" stroke="#3555d5" stroke-width="1.15" fill="none" stroke-linejoin="round"/></svg>
<div class="a" style="left:685.9px;top:568px;width:37.6px;height:17.7px;border-radius:3px;background:#ccf6fb"></div>
<svg style="left:692px;top:572px" width="15" height="10" viewBox="0 0 15 10"><path d="M0.8 5C2.5 1.8 5 0.8 7.5 0.8S12.5 1.8 14.2 5C12.5 8.2 10 9.2 7.5 9.2S2.5 8.2 0.8 5Z" stroke="#2b8a9a" stroke-width="1.3" fill="none"/><circle cx="7.5" cy="5" r="1.9" fill="#2b8a9a"/></svg>
<div class="a" style="left:710.5px;top:569.8px;font-size:11.6px;color:#2f8d9c;">3</div>
<div class="a" style="left:730.1px;top:568px;width:35px;height:17.7px;border-radius:3px;background:#eee7fd"></div>
<svg style="left:736.6px;top:571px" width="13" height="13" viewBox="0 0 13 13"><path d="M1 6H2.8M2.3 2.2L3.6 3.4M6.3 0.8V2.4M10 2.2L8.9 3.4M2.4 9.8L3.6 8.7" stroke="#7b46d8" stroke-width="1.2" stroke-linecap="round"/><path d="M6.6 5.9L12 7.5L8.9 8.6L8 11.5Z" stroke="#7b46d8" stroke-width="1.2" fill="#7b46d8" fill-opacity="0.45" stroke-linejoin="round"/></svg>
<div class="a" style="left:753.6px;top:569.8px;font-size:11.6px;color:#7442d6;">1</div>
<svg style="left:773.7px;top:572px" width="12" height="10" viewBox="0 0 12 10"><path d="M1.5 7H8A3 3 0 0 0 8 1H6.5M4 4.5L1.5 7L4 9.5" stroke="#9ca3af" stroke-width="1.2" fill="none" stroke-linecap="round" stroke-linejoin="round"/></svg>
<div class="a" style="left:857px;top:571px;font-size:11px;color:#8d9199;">-</div>
<div class="a" style="left:922px;top:571px;font-size:11px;color:#4b5058;">2 days ago</div>


<div class="a" style="left:216px;top:596.3px;width:789px;height:1.5px;background:#e6e8eb"></div>
<div class="a" style="left:720.6px;top:606px;font-size:11.4px;color:#4b5058">1-25 of 530</div>
<svg style="left:803px;top:606px" width="6" height="10" viewBox="0 0 6 10"><path d="M5 1L1 5L5 9" stroke="#b0b4ba" stroke-width="1.2" fill="none"/></svg>
<div class="a" style="left:827.5px;top:601.5px;width:17.3px;height:18.2px;border-radius:3px;background:#dde7fb"></div>
<div class="a" style="left:826px;top:606px;width:20px;text-align:center;font-size:11.4px;color:#4a6fd8">1</div>
<div class="a" style="left:850px;top:606px;width:20px;text-align:center;font-size:11.4px;color:#4b5058">2</div>
<div class="a" style="left:874.6px;top:606px;width:20px;text-align:center;font-size:11.4px;color:#4b5058">3</div>
<div class="a" style="left:901px;top:606px;width:20px;text-align:center;font-size:11.4px;color:#4b5058">4</div>
<div class="a" style="left:927px;top:606px;width:20px;text-align:center;font-size:11.4px;color:#4b5058">5</div>
<div class="a" style="left:951.5px;top:606px;width:20px;text-align:center;font-size:11.4px;color:#4b5058">6</div>
<svg style="left:989px;top:606px" width="6" height="10" viewBox="0 0 6 10"><path d="M1 1L5 5L1 9" stroke="#333" stroke-width="1.4" fill="none"/></svg>

</div></body></html>
